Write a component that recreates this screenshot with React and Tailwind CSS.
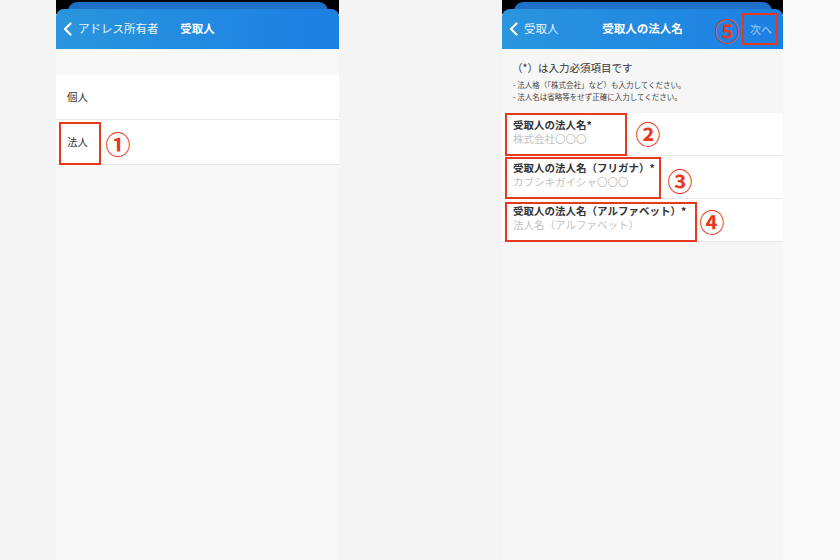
import React from "react";

const FONT = "font-['Noto_Sans_CJK_JP','Noto_Sans',sans-serif]";

function Chevron() {
  return (
    <svg width="9" height="14" viewBox="0 0 9 14" className="shrink-0">
      <path d="M7.5 1.5 L2 7 L7.5 12.5" fill="none" stroke="white" strokeWidth="2.2" strokeLinecap="round" strokeLinejoin="round" />
    </svg>
  );
}

function Num({ children, className }) {
  return (
    <span className={`absolute flex h-[24px] w-[24px] items-center justify-center text-[25px] font-bold leading-none text-[#e6391e] ${className}`}>
      {children}
    </span>
  );
}

function Header({ back, title, right }) {
  return (
    <div className="relative">
      <div className="absolute inset-x-0 top-0 h-[14px] bg-black" />
      <div className="absolute left-[12px] right-[11px] top-[2px] h-[14px] rounded-t-[9px] bg-[#1e6fc6]" />
      <div className="relative mt-[9px] grid h-[40px] grid-cols-[1fr_auto_1fr] items-center rounded-t-[8px] bg-gradient-to-r from-[#2b95dd] to-[#1c7fe3]">
        <div className="flex items-center gap-[6px] pl-[7px] text-[11.5px] text-white/90">
          <Chevron />
          <span>{back}</span>
        </div>
        <div className="text-[11.5px] font-bold text-white">{title}</div>
        <div className="relative flex h-full items-center justify-end pr-[11px]">{right}</div>
      </div>
    </div>
  );
}

function LeftPhone() {
  return (
    <div className="flex w-[283px] shrink-0 flex-col bg-[#f8f8f8]">
      <Header back="アドレス所有者" title="受取人" />
      <div className="h-[26px]" />
      <div className="bg-white">
        <div className="flex h-[45px] items-center border-b border-[#e6e6e6] pl-[11px] text-[10.5px] text-[#333]">個人</div>
        <div className="relative flex h-[45px] items-center border-b border-[#e6e6e6] pl-[11px] text-[10.5px] text-[#333]">
          法人
          <div className="absolute left-[3px] top-[2px] h-[43px] w-[42px] border-2 border-[#e6391e]" />
          <Num className="left-[50px] top-[11px]">①</Num>
        </div>
      </div>
    </div>
  );
}

function Row({ label, placeholder, box, num, numPos, boxPos }) {
  return (
    <div className="relative h-[43px] border-b border-[#e8e8e8] pl-[11px] pt-[5px]">
      <div className="text-[10.5px] font-bold leading-[14px] text-[#333]">{label}</div>
      <div className="text-[10.5px] leading-[14px] text-[#c2c2c2]">{placeholder}</div>
      <div className={`absolute left-[3px] border-2 border-[#e6391e] ${boxPos} ${box}`} />
      <Num className={numPos}>{num}</Num>
    </div>
  );
}

function RightPhone() {
  return (
    <div className="flex w-[281px] shrink-0 flex-col bg-[#f6f6f6]">
      <Header
        back="受取人"
        title="受取人の法人名"
        right={
          <>
            <span className="text-[11px] text-[#a6cdf3]">次へ</span>
            <div className="absolute right-[5px] top-[4px] h-[32px] w-[36px] border-2 border-[#e6391e]" />
            <Num className="right-[44px] top-[9px]">⑤</Num>
          </>
        }
      />
      <div className="h-[64px] pt-[12px]">
        <div className="pl-[10px] text-[10.5px] leading-[14px] text-[#333]">（*）は入力必須項目です</div>
        <div className="mt-[4px] pl-[11px] text-[7.5px] leading-[12px] text-[#444]">- 法人格（「株式会社」など）も入力してください。</div>
        <div className="pl-[11px] text-[7.5px] leading-[12px] text-[#444]">- 法人名は省略等をせず正確に入力してください。</div>
      </div>
      <div className="bg-white">
        <Row label="受取人の法人名*" placeholder="株式会社〇〇〇" boxPos="top-0" box="h-[43px] w-[122px]" num="②" numPos="left-[134px] top-[8px]" />
        <Row label="受取人の法人名（フリガナ）*" placeholder="カブシキガイシャ〇〇〇" boxPos="top-[1px]" box="h-[42px] w-[156px]" num="③" numPos="left-[166px] top-[12px]" />
        <Row label="受取人の法人名（アルファベット）*" placeholder="法人名（アルファベット）" boxPos="top-[3px]" box="h-[40px] w-[192px]" num="④" numPos="left-[198px] top-[10px]" />
      </div>
    </div>
  );
}

export default function App() {
  return (
    <div className={`flex h-[560px] w-[840px] overflow-hidden bg-[#f5f5f5] ${FONT}`}>
      <div className="w-[56px] shrink-0" />
      <LeftPhone />
      <div className="w-[163px] shrink-0 bg-[#f4f4f4]" />
      <RightPhone />
      <div className="flex-1 bg-[#f9f9f9]" />
    </div>
  );
}
